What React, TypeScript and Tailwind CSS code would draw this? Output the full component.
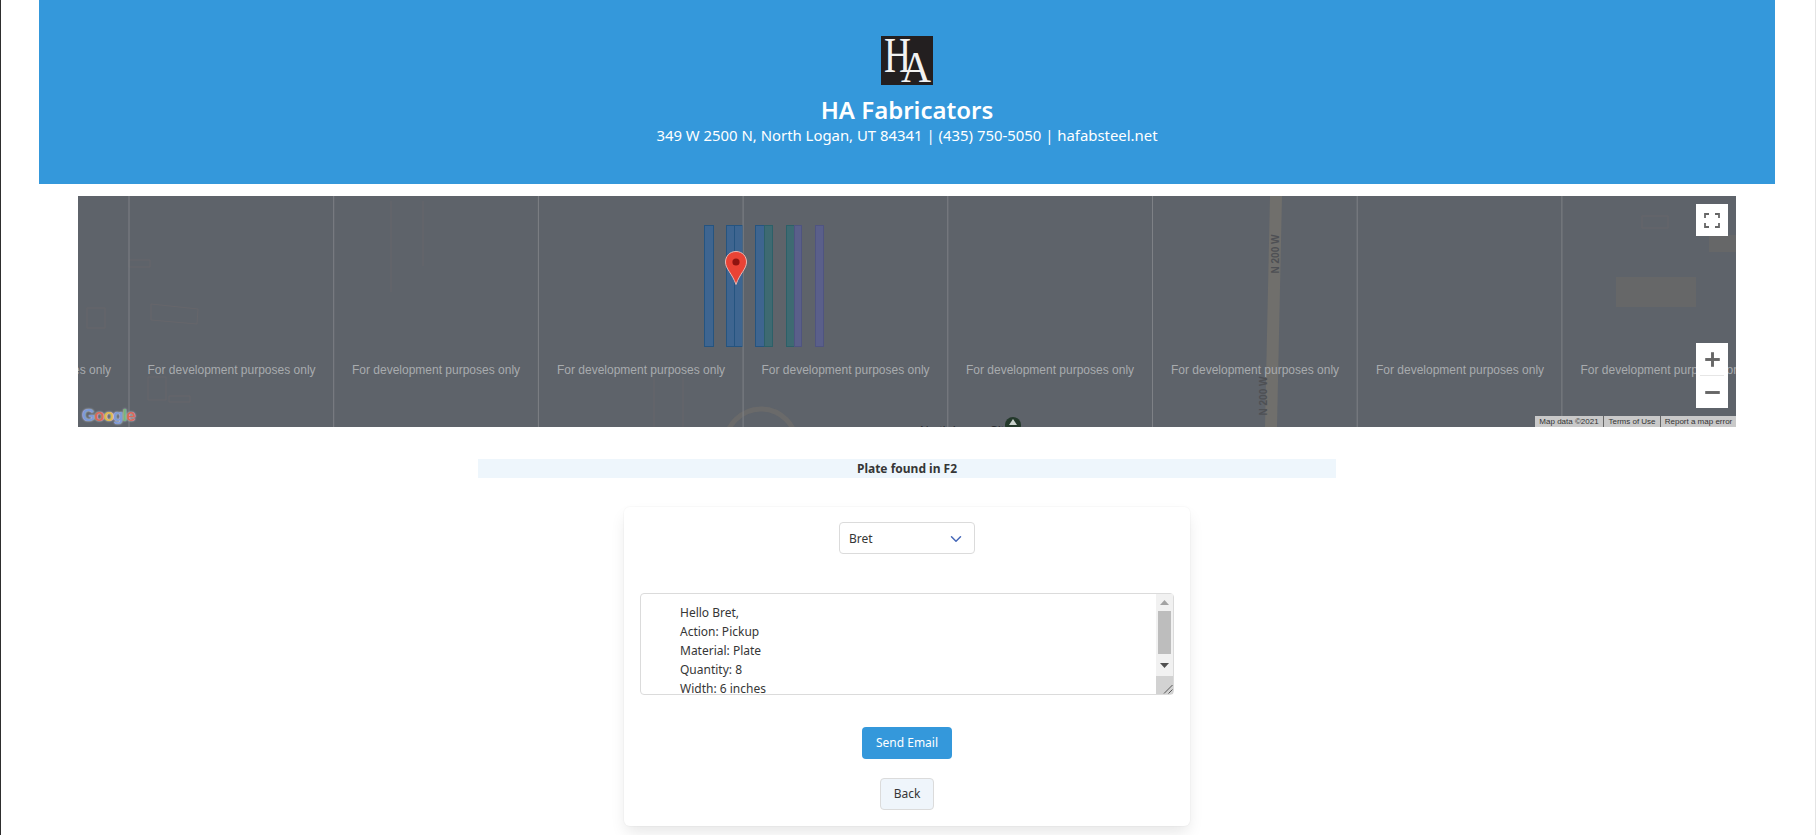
import { ChevronDown, Plus, Minus } from "lucide-react";

const tileEdges = [129, 333.7, 538.4, 743.1, 947.8, 1152.5, 1357.2, 1561.9];
const labelCentres = [-51, 153.5, 358, 563, 767.5, 972, 1177, 1382, 1586.5];

const mailLines = ["Hello Bret,", "Action: Pickup", "Material: Plate", "Quantity: 8", "Width: 6 inches"];

const MapBackground = () => (
  <svg className="absolute inset-0 h-full w-full" viewBox="0 0 1658 231">
    {/* faint buildings and roads under the dev overlay */}
    <g fill="none" stroke="#66666a" strokeWidth="1">
      <rect x="9" y="112" width="18" height="20" />
      <path d="M73 108 L120 113 L119 128 L73 124 Z" />
      <path d="M51 64 H72 V71 H51 Z" />
      <path d="M70 181 H88 V204 H70 Z M91 200 H112 V206 H91 Z" />
      <path d="M313 5 V96 M345 5 V70 M576 181 V231 M605 181 V231" />
      <rect x="1564" y="20" width="26" height="12" />
    </g>
    <ellipse cx="683" cy="250" rx="36" ry="37" fill="none" stroke="#6a6a6a" strokeWidth="5" />
    <g fill="#666768">
      <rect x="1538" y="81" width="80" height="30" />
      <rect x="1631" y="39" width="27" height="17" />
    </g>
    <path d="M1192 0 H1204 L1199 231 H1187 Z" fill="#706f6c" />
    {/* plate rows */}
    <g strokeWidth="1">
      <rect x="626.5" y="29.5" width="9" height="121" fill="#3e6590" stroke="#255480" />
      <rect x="648.5" y="29.5" width="8" height="121" fill="#3e6590" stroke="#255480" />
      <rect x="656.5" y="29.5" width="8" height="121" fill="#3e6590" stroke="#255480" />
      <rect x="677.5" y="29.5" width="9" height="121" fill="#3e6590" stroke="#255480" />
      <rect x="686.5" y="29.5" width="8" height="121" fill="#3e6a72" stroke="#2c6068" />
      <rect x="708.5" y="29.5" width="8" height="121" fill="#3e6a72" stroke="#2c6068" />
      <rect x="716.5" y="29.5" width="7" height="121" fill="#5a5f8a" stroke="#4f5480" />
      <rect x="737.5" y="29.5" width="8" height="121" fill="#5a5f8a" stroke="#4f5480" />
    </g>
    <circle cx="935" cy="229" r="8" fill="#24392b" />
    <path d="M935 223 L939 229 H931 Z" fill="#c9d2cc" />
    {tileEdges.map((x) => (
      <line key={x} x1={x - 78} x2={x - 78} y1="0" y2="231" stroke="#7e8186" strokeWidth="1" />
    ))}
    {/* marker */}
    <path
      d="M658 55.5 C651.5 55.5 647.5 60.5 647.5 66 C647.5 73 654 77 658 88.5 C662 77 668.5 73 668.5 66 C668.5 60.5 664.5 55.5 658 55.5 Z"
      fill="#ea4335"
      stroke="#eab7b2"
      strokeWidth="1"
    />
    <circle cx="658" cy="66" r="3.6" fill="#8f1410" />
  </svg>
);

const Logo = () => (
  <svg className="h-[49px] w-[52px] shrink-0" viewBox="0 0 52 49">
    <rect width="52" height="49" fill="#231f20" />
    <text x="3" y="36" fill="#f2f2f2" fontFamily="'Liberation Serif', serif" fontSize="50" textLength="27" lengthAdjust="spacingAndGlyphs">
      H
    </text>
    <text x="20" y="46" fill="#f2f2f2" fontFamily="'Liberation Serif', serif" fontSize="44" textLength="30" lengthAdjust="spacingAndGlyphs">
      A
    </text>
  </svg>
);

const App = () => {
  return (
    <div className="relative h-[835px] w-full overflow-hidden border-l border-r border-l-[#2e2e2e] border-r-[#e4e4e4] bg-white pr-[40px] pl-[38px] font-['Noto_Sans','Open_Sans',sans-serif] text-[#363636]">
      {/* header */}
      <header className="flex h-[184px] flex-col items-center bg-[#3498db] pt-[36px] text-white">
        <Logo />
        <h1 className="mt-[7px] text-[24px] leading-[36px] font-semibold">HA Fabricators</h1>
        <p className="-mt-px text-[14.9px] leading-[16px]">349 W 2500 N, North Logan, UT 84341 | (435) 750-5050 | hafabsteel.net</p>
      </header>

      {/* map */}
      <div className="relative mx-[39px] mt-[12px] h-[231px] overflow-hidden bg-[#5e636a] font-['Liberation_Sans',sans-serif]">
        <MapBackground />
        {labelCentres.map((c) => (
          <span
            key={c}
            className="absolute top-[165px] w-[180px] -translate-x-1/2 text-center text-[12px] leading-[18px] whitespace-nowrap text-[#a8abae]"
            style={{ left: c }}
          >
            For development purposes only
          </span>
        ))}
        <span className="absolute top-[52px] left-[1173px] w-[50px] -rotate-90 text-center text-[10px] leading-[12px] font-bold text-[#4e5054]">N 200 W</span>
        <span className="absolute top-[194px] left-[1161px] w-[50px] -rotate-90 text-center text-[10px] leading-[12px] font-bold text-[#4e5054]">N 200 W</span>
        <span className="absolute top-[228px] left-[842px] text-[12px] leading-[14px] whitespace-nowrap text-[#2c2e31]">North Logan City</span>

        {/* google mark */}
        <div className="absolute bottom-[1px] left-[4px] text-[17px] leading-[20px] font-bold tracking-[-1px] [text-shadow:0_0_2px_#dfe6f5]">
          <span className="text-[#7c9ad8]">G</span>
          <span className="text-[#d9695a]">o</span>
          <span className="text-[#e0b94f]">o</span>
          <span className="text-[#7c9ad8]">g</span>
          <span className="text-[#75b57a]">l</span>
          <span className="text-[#d9695a]">e</span>
        </div>

        {/* fullscreen */}
        <div className="absolute top-[8px] right-[8px] flex h-[32px] w-[32px] items-center justify-center bg-white">
          <svg width="16" height="15" viewBox="0 0 16 15" fill="none" stroke="#666666" strokeWidth="1.8">
            <path d="M1 5 V1 H5 M11 1 H15 V5 M15 10 V14 H11 M5 14 H1 V10" />
          </svg>
        </div>

        {/* zoom */}
        <div className="absolute top-[147px] right-[8px] flex h-[65px] w-[32px] flex-col items-center bg-white">
          <div className="flex h-[32px] items-center justify-center">
            <Plus size={25} strokeWidth={2.8} strokeLinecap="butt" className="text-[#666666]" />
          </div>
          <div className="h-px w-[24px] bg-[#e6e6e6]" />
          <div className="flex h-[32px] items-center justify-center">
            <Minus size={25} strokeWidth={2.8} strokeLinecap="butt" className="text-[#666666]" />
          </div>
        </div>

        {/* attribution */}
        <div className="absolute right-0 bottom-0 flex h-[11px] w-[201px] items-center bg-[#c9c9c9] text-[8px] leading-[11px] text-[#333333]">
          <span className="w-[68px] text-center">Map data ©2021</span>
          <span className="w-[57px] border-l border-[#666666] text-center">Terms of Use</span>
          <span className="flex-1 border-l border-[#666666] text-center">Report a map error</span>
        </div>
      </div>

      {/* notice */}
      <div className="mx-auto mt-[32px] h-[19px] w-[858px] bg-[#eef6fc] text-center text-[12px] leading-[19px] font-bold">Plate found in F2</div>

      {/* mail form */}
      <div className="mx-auto mt-[29px] flex h-[319px] w-[566px] flex-col items-center rounded-[6px] bg-white pt-[15px] shadow-[0_8px_16px_-2px_rgba(10,10,10,0.1),0_0_0_1px_rgba(10,10,10,0.02)]">
        <div className="flex h-[32px] w-[136px] items-center justify-between rounded-[4px] border border-[#dbdbdb] px-[9px] pt-px text-[12px]">
          <span className="pt-px">Bret</span>
          <ChevronDown size={18} strokeWidth={2} className="text-[#4668b8]" />
        </div>

        <div className="mt-[39px] flex h-[102px] w-[534px] rounded-[4px] border border-[#dbdbdb] text-[12px] leading-[19px]">
          <div className="h-full flex-1 overflow-hidden pt-[9px] pl-[39px]">
            {mailLines.map((line) => (
              <div key={line}>{line}</div>
            ))}
          </div>
          {/* native-looking scrollbar and resize grip */}
          <div className="flex w-[17px] flex-col bg-[#f1f1f1]">
            <div className="flex h-[17px] items-center justify-center">
              <svg width="9" height="5" viewBox="0 0 9 5"><path d="M4.5 0 L9 5 H0 Z" fill="#a3a3a3" /></svg>
            </div>
            <div className="mx-auto h-[43px] w-[13px] bg-[#bdbdbd]" />
            <div className="flex h-[22px] items-center justify-center">
              <svg width="9" height="5" viewBox="0 0 9 5"><path d="M0 0 H9 L4.5 5 Z" fill="#505050" /></svg>
            </div>
            <div className="flex flex-1 items-end justify-end bg-[#d2d2d2]">
              <svg width="10" height="10" viewBox="0 0 10 10" fill="none" stroke="#555555" strokeWidth="1">
                <path d="M1 9.5 L9.5 1 M5.5 9.5 L9.5 5.5" />
              </svg>
            </div>
          </div>
        </div>

        <button className="mt-[32px] h-[32px] w-[90px] rounded-[4px] bg-[#3498db] text-[12px] text-white">Send Email</button>
        <button className="mt-[19px] h-[32px] w-[54px] rounded-[4px] border border-[#dbdbdb] bg-[#eff5fb] text-[12px]">Back</button>
      </div>
    </div>
  );
};

export default App;
